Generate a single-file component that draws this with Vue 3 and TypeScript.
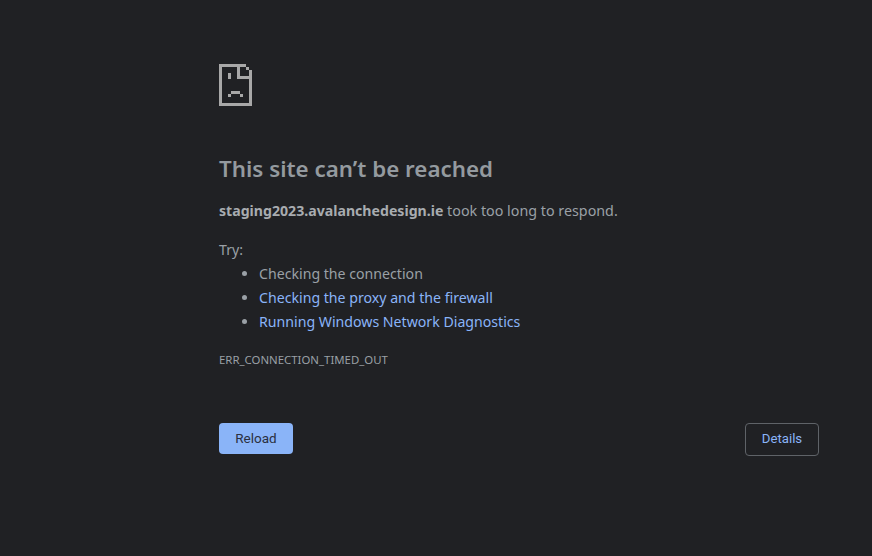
<script setup lang="ts">
const steps = [
  { text: 'Checking the connection', link: false },
  { text: 'Checking the proxy and the firewall', link: true },
  { text: 'Running Windows Network Diagnostics', link: true },
]
</script>

<template>
  <main class="page">
    <div class="content">
      <svg class="icon" width="33" height="42" viewBox="0 0 33 42" shape-rendering="crispEdges" fill="#a8a8a8">
        <path d="M0 0H27V3H30V6H33V42H0ZM3 3V39H30V15H18V3ZM21 3V12H30V6H27V3Z" fill-rule="evenodd" />
        <rect x="9" y="9" width="3" height="6" />
        <rect x="12" y="27" width="9" height="3" />
        <rect x="9" y="30" width="3" height="3" />
        <rect x="21" y="30" width="3" height="3" />
      </svg>
      <h1 class="title">This site can’t be reached</h1>
      <p class="summary"><strong>staging2023.avalanchedesign.ie</strong> took too long to respond.</p>
      <p class="try">Try:</p>
      <ul class="steps">
        <li v-for="step in steps" :key="step.text" :class="{ link: step.link }">{{ step.text }}</li>
      </ul>
      <p class="code">ERR_CONNECTION_TIMED_OUT</p>
      <div class="actions">
        <button class="reload" type="button">Reload</button>
        <button class="details" type="button">Details</button>
      </div>
    </div>
  </main>
</template>

<style>
html, body { margin: 0; background: #202124; }
</style>

<style scoped>
.page {
  width: 872px;
  height: 556px;
  box-sizing: border-box;
  padding: 64px 0 0 219px;
  background: #202124;
  font-family: "Noto Sans", sans-serif;
  color: #9aa0a6;
  overflow: hidden;
}
.content { width: 600px; }
.icon { display: block; }
.title {
  margin: 45px 0 0;
  font-size: 22.37px;
  line-height: 36px;
  font-weight: 600;
  color: #949a9f;
}
.summary {
  margin: 12px 0 0;
  font-size: 14.3px;
  line-height: 24px;
}
.summary strong { font-size: 14.13px; font-weight: 700; color: #a8acb0; }
.try {
  margin: 15px 0 0;
  font-size: 14.15px;
  line-height: 24px;
}
.steps {
  margin: 0;
  padding: 0 0 0 40px;
  font-size: 14.15px;
  line-height: 24px;
}
.link { color: #8ab4f8; }
.steps li::marker { color: #9aa0a6; }
.code {
  margin: 18px 0 0;
  font-size: 11.4px;
  line-height: 16px;
}
.actions {
  display: flex;
  justify-content: space-between;
  align-items: flex-start;
  margin-top: 55px;
}
button {
  font-family: Roboto, sans-serif;
  box-sizing: border-box;
  border-radius: 4px;
  padding: 0 0 2px;
}
.reload {
  width: 74px;
  height: 31px;
  border: none;
  background: #8ab4f8;
  color: #2b3040;
  font-size: 13.5px;
  font-weight: 400;
}
.details {
  width: 74px;
  height: 33px;
  background: transparent;
  border: 1px solid #5f6368;
  color: #8ab4f8;
  font-size: 13.2px;
  font-weight: 400;
}
</style>
